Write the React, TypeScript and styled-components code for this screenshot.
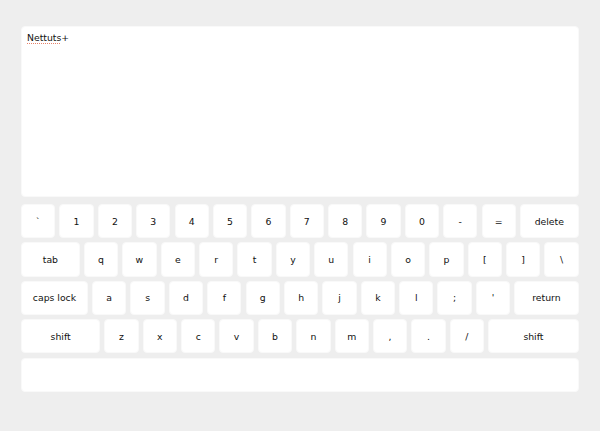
import React from "react";
import styled, { createGlobalStyle } from "styled-components";

const S = 558 / 683;
const px = (n: number) => `${(n * S).toFixed(2)}px`;

const Global = createGlobalStyle`
  html, body { margin: 0; padding: 0; }
  body {
    background: #eeeeee;
    font-family: "DejaVu Sans", Verdana, sans-serif;
    font-size: 9.3px;
    color: #111;
  }
`;

const Container = styled.div`
  width: 558px;
  margin: 0 auto;
  padding-top: 26px;
  display: flex;
  flex-direction: column;
`;

const Write = styled.div`
  box-sizing: border-box;
  width: 100%;
  height: 171px;
  margin-bottom: 7px;
  padding: 4px 5px;
  background: #fff;
  border: 1px solid #f9f9f9;
  border-radius: 4px;
  line-height: 1.5;
  font-size: 9.3px;
`;

const Misspelled = styled.span`
  text-decoration: underline dotted #e8826a;
  text-underline-offset: 2px;
`;

const Keyboard = styled.ul`
  list-style: none;
  margin: 0;
  padding: 0;
  display: flex;
  flex-direction: column;
  gap: ${px(5)};
`;

const Row = styled.li`
  display: flex;
  gap: ${px(5)};
`;

const Key = styled.span<{ $w?: number }>`
  box-sizing: border-box;
  flex: 0 0 auto;
  width: ${(p) => px((p.$w ?? 40) + 2)};
  height: ${px(42)};
  display: flex;
  align-items: center;
  justify-content: center;
  background: #fff;
  border: 1px solid #f9f9f9;
  border-radius: 4px;
  white-space: nowrap;
`;

const rows: [string, number?][][] = [
  [["`"], ["1"], ["2"], ["3"], ["4"], ["5"], ["6"], ["7"], ["8"], ["9"], ["0"], ["-"], ["="], ["delete", 70]],
  [["tab", 70], ["q"], ["w"], ["e"], ["r"], ["t"], ["y"], ["u"], ["i"], ["o"], ["p"], ["["], ["]"], ["\\"]],
  [["caps lock", 80], ["a"], ["s"], ["d"], ["f"], ["g"], ["h"], ["j"], ["k"], ["l"], [";"], ["'"], ["return", 77]],
  [["shift", 95], ["z"], ["x"], ["c"], ["v"], ["b"], ["n"], ["m"], [","], ["."], ["/"], ["shift", 109]],
];

export default function App() {
  return (
    <>
      <Global />
      <Container>
        <Write>
          <Misspelled>Nettuts</Misspelled>+
        </Write>
        <Keyboard>
          {rows.map((r, i) => (
            <Row key={i}>
              {r.map(([label, w], j) => (
                <Key key={j} $w={w}>
                  {label}
                </Key>
              ))}
            </Row>
          ))}
          <Row>
            <Key $w={681}>&nbsp;</Key>
          </Row>
        </Keyboard>
      </Container>
    </>
  );
}
